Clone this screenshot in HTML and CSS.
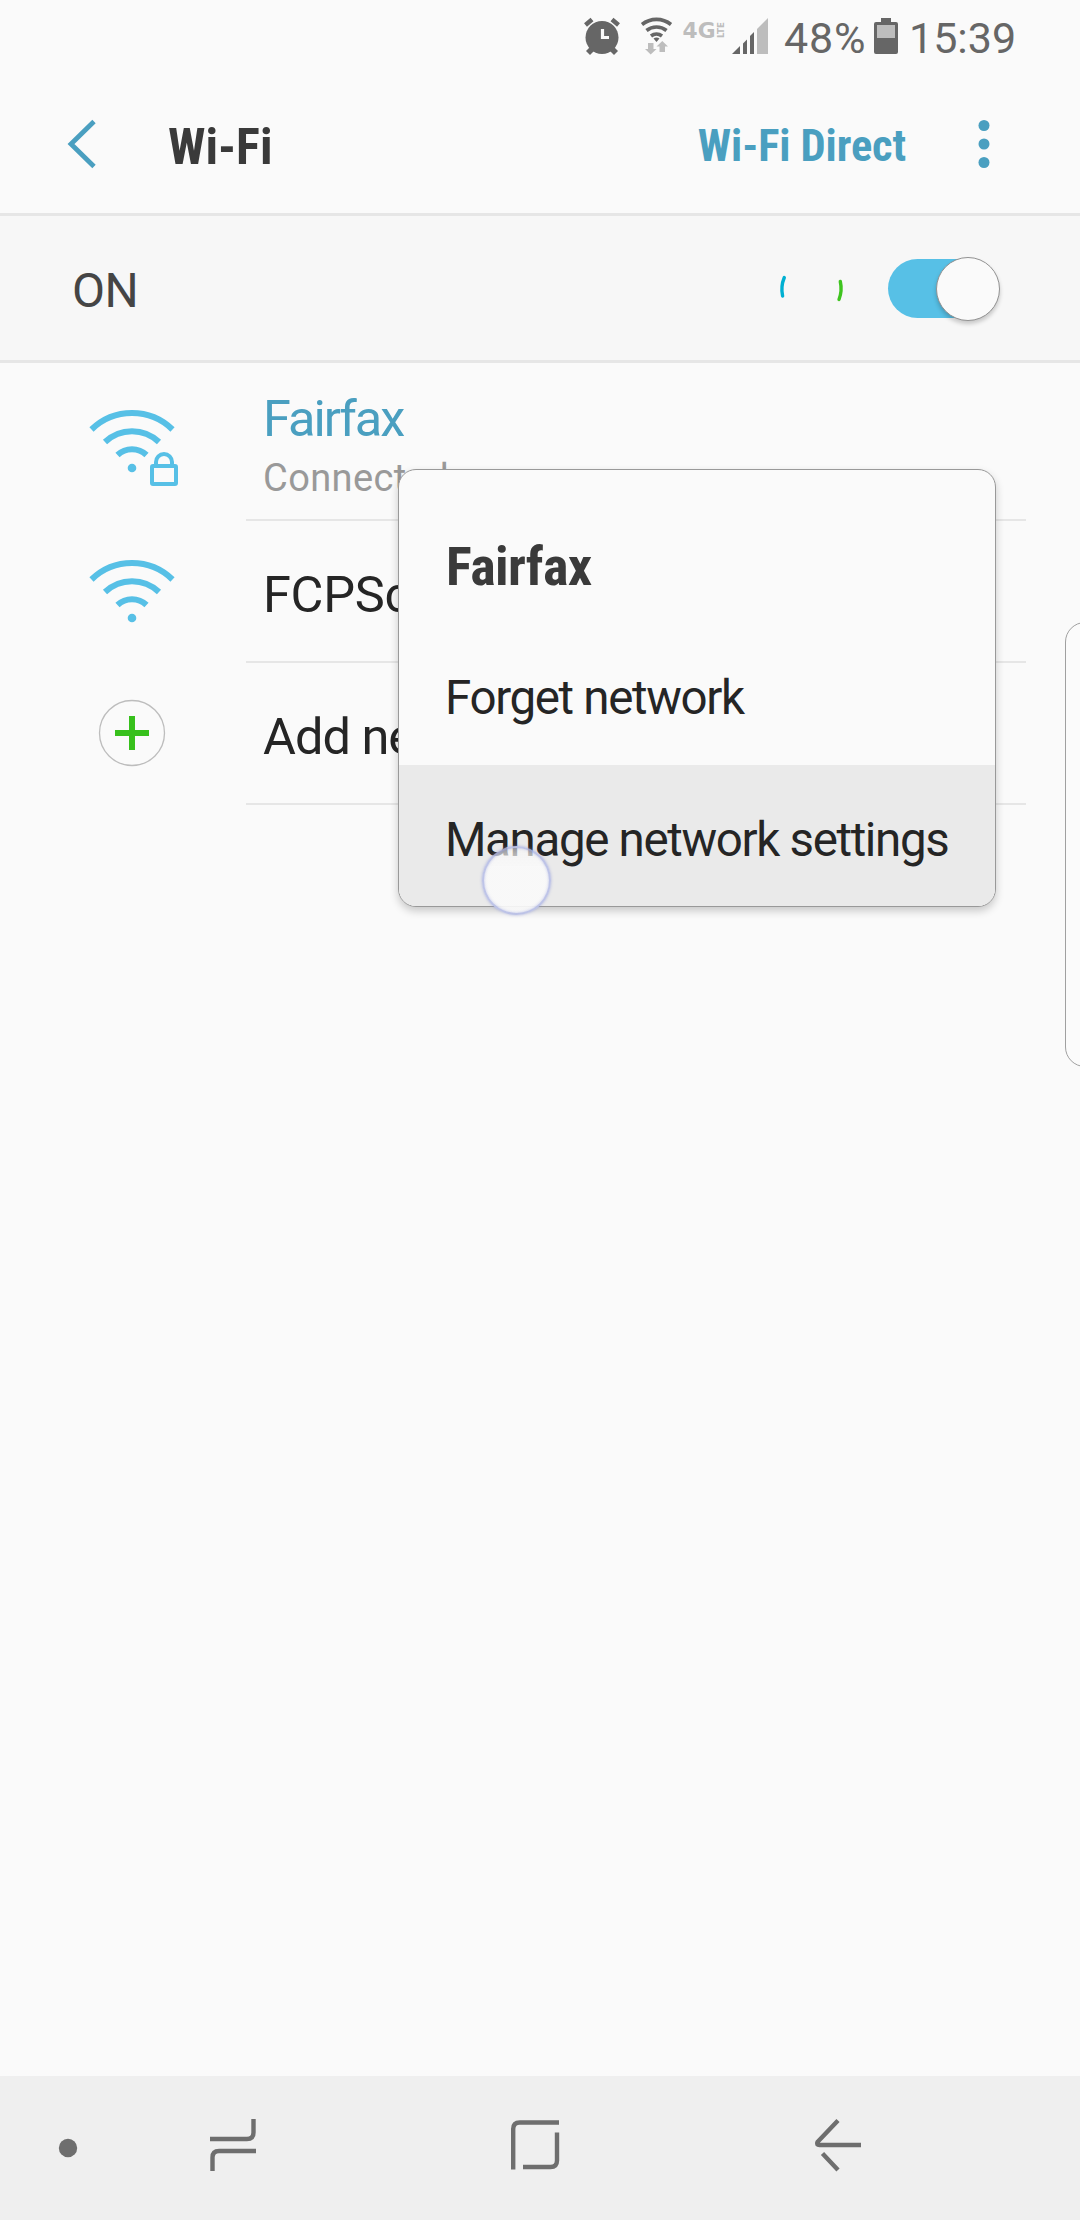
FILE: index.html
```
<!DOCTYPE html>
<html lang="en">
<head>
<meta charset="utf-8">
<title>Wi-Fi</title>
<link rel="stylesheet" href="styles.css">
</head>
<body>
<div class="screen">
  <header class="status">
    <svg class="status-icons" width="208" height="72" viewBox="576 0 208 72">
      <g fill="#666">
        <circle cx="602" cy="37.5" r="16.5"/>
        <path d="M590 47l4 4-4 4-4-4zM614 47l-4 4 4 4 4-4z"/>
      </g>
      <path d="M585.5 25l6.5-5.500M618.500 25l-6.500-5.500" stroke="#666" stroke-width="4.500" fill="none"/>
      <path d="M602.500 29v8.500h6.500" stroke="#fafafa" stroke-width="3.200" fill="none"/>
      <g fill="none" stroke="#666" stroke-width="3.600">
        <path d="M642 24.500a23 23 0 0 1 29 0M646.500 30.500a16 16 0 0 1 20 0M651 36a9 9 0 0 1 11 0"/>
      </g>
      <path d="M653.500 38.500q3-2 6 0l-3 3.500z" fill="#666"/>
      <path d="M648 43h5.500v6h3l-5.800 5.500-5.700-5.500h3zM659.500 52h5.500v-5.500h3l-5.700-5.500-5.800 5.500h3z" fill="#bdbdbd"/>
      <text class="net" x="682.500" y="37.500" textLength="33" lengthAdjust="spacingAndGlyphs">4G</text>
      <text class="lte" transform="translate(723.500 38) rotate(-90)" textLength="16" lengthAdjust="spacingAndGlyphs">LTE</text>
      <path d="M732 54l8-8v8zM743 54V43.500l4-4V54zM750 54V36l4-4V54z" fill="#666"/>
      <path d="M757 54V29l11-11V54z" fill="#bdbdbd"/>
    </svg>
    <span class="status-text pct">48%</span>
    <svg class="battery" width="24" height="36" viewBox="0 0 24 36">
      <path d="M7 0h10v4h5q2 0 2 2v28q0 2-2 2H2q-2 0-2-2V6q0-2 2-2h5z" fill="#666"/>
      <path d="M3 7h18v13H3z" fill="#bdbdbd"/>
    </svg>
    <span class="status-text">15:39</span>
  </header>

  <div class="appbar">
    <svg class="back" width="32" height="52" viewBox="0 0 32 52"><path d="M29 3.500L6 26l23 22.500" fill="none" stroke="#4a9fc0" stroke-width="4.800"/></svg>
    <h1 class="title">Wi-Fi</h1>
    <span class="direct">Wi-Fi Direct</span>
    <svg class="more" width="12" height="50" viewBox="0 0 12 50" fill="#4a9fc0"><circle cx="6" cy="6.500" r="5.500"/><circle cx="6" cy="25" r="5.500"/><circle cx="6" cy="43.500" r="5.500"/></svg>
  </div>

  <div class="master">
    <span class="on">ON</span>
    <svg class="spinner" width="70" height="70" viewBox="776 252 70 70" fill="none" stroke-width="3.400" stroke-linecap="round">
      <path d="M784.300 276.500a31 31 0 0 0-1.700 18.500" stroke="#00b0d2"/>
      <path d="M840.300 280.500a31 31 0 0 1-1.300 18" stroke="#3fc41f"/>
    </svg>
    <div class="switch"><div class="thumb"></div></div>
  </div>

  <main class="list">
    <div class="row first">
      <svg class="icon" width="246" height="158" viewBox="0 363 246 158" fill="none" stroke="#57c0e6" stroke-width="6">
        <path d="M91.500 429.500a58 58 0 0 1 81 0M105 442a39 39 0 0 1 54 0M117.500 455a21 21 0 0 1 29 0"/>
        <circle cx="132" cy="468" r="4.300" fill="#57c0e6" stroke="none"/>
        <path d="M156 464v-2a8 8 0 0 1 16 0v2" stroke-width="4"/>
        <rect x="152" y="466" width="24" height="18" rx="1" stroke-width="4"/>
      </svg>
      <div class="body">
        <span class="name active">Fairfax</span>
        <span class="state">Connected</span>
      </div>
    </div>
    <div class="row">
      <svg class="icon" width="246" height="142" viewBox="0 521 246 142" fill="none" stroke="#57c0e6" stroke-width="6">
        <path d="M91.500 579.500a58 58 0 0 1 81 0M105 592a39 39 0 0 1 54 0M117.500 605a21 21 0 0 1 29 0"/>
        <circle cx="132" cy="618" r="4.300" fill="#57c0e6" stroke="none"/>
      </svg>
      <div class="body"><span class="name ssid">FCPSchools</span></div>
    </div>
    <div class="row">
      <svg class="icon" width="246" height="142" viewBox="0 663 246 142" fill="none">
        <circle cx="132" cy="733" r="32.500" stroke="#bdbdbd" stroke-width="1.300"/>
        <path d="M115 733h34M132 716v34" stroke="#37c01c" stroke-width="6"/>
      </svg>
      <div class="body"><span class="name add">Add network</span></div>
    </div>
  </main>

  <nav class="nav">
    <svg width="1080" height="144" viewBox="0 2076 1080 144" fill="none" stroke="#6e6e6e" stroke-width="4.400">
      <circle cx="68" cy="2148" r="9.200" fill="#6e6e6e" stroke="none"/>
      <path d="M210 2139h37q6.500 0 6.500-6.500V2119M256 2151h-37q-6.500 0-6.500 6.500V2171"/>
      <path d="M513.200 2169.500V2129q0-6.500 6.500-6.500H559M523 2167h27.500q6.500 0 6.500-6.500V2132.500"/>
      <path d="M838 2120.500L817.500 2142q-1.500 3 2 3H861M822.500 2153.500l15.500 16.500" stroke-linejoin="round"/>
    </svg>
  </nav>

  <aside class="edge-panel"></aside>

  <div class="popup">
    <h2 class="popup-title">Fairfax</h2>
    <div class="option">Forget network</div>
    <div class="option pressed">Manage network settings</div>
  </div>
  <div class="touch"></div>
</div>
</body>
</html>
```
FILE: styles.css
```
* { box-sizing: border-box; }
body { margin: 0; background: #fafafa; }
.screen {
  position: relative;
  width: 1080px;
  height: 2220px;
  overflow: hidden;
  display: flex;
  flex-direction: column;
  background: #fafafa;
  font-family: Roboto, "Liberation Sans", sans-serif;
  color: #252525;
}
h1, h2 { margin: 0; }
svg { display: block; flex: none; }

.status { display: flex; height: 72px; padding-left: 576px; color: #666; }
.status-text { font-size: 43px; line-height: 76px; white-space: nowrap; }
.pct { width: 90px; letter-spacing: .8px; }
.battery { margin: 18px 11px 0 0; }
.net { font: 700 21.5px "DejaVu Sans", sans-serif; fill: #bdbdbd; }
.lte { font: 700 9px "DejaVu Sans", sans-serif; fill: #bdbdbd; }

.appbar {
  display: flex;
  align-items: center;
  height: 144px;
  padding: 0 90px 0 65px;
  border-bottom: 3px solid #e6e6e6;
}
.back { margin-top: 2px; }
.title {
  margin-left: 71px;
  padding-top: 8px;
  font-size: 50px;
  font-weight: 700;
  font-stretch: 75%;
  color: #3a3a3a;
}
.direct {
  margin-left: auto;
  padding-top: 7px;
  font-size: 44.5px;
  font-weight: 700;
  font-stretch: 75%;
  letter-spacing: -.1px;
  color: #4a9fc0;
}
.more { margin: 2px 0 0 72px; }

.master {
  display: flex;
  align-items: center;
  height: 147px;
  padding: 0 80px 0 72px;
  background: #f7f7f7;
  border-bottom: 3px solid #e6e6e6;
}
.on { padding-top: 5px; font-size: 48px; letter-spacing: -.5px; color: #454545; }
.spinner { margin-left: auto; margin-right: 42px; }
.switch {
  display: flex;
  align-items: center;
  justify-content: flex-end;
  width: 112px;
  height: 59px;
  border-radius: 30px;
  background: linear-gradient(90deg, #57c0e6 80px, transparent 80px);
}
.thumb {
  width: 64px;
  height: 64px;
  flex: none;
  margin-top: 1px;
  border: 1px solid #929292;
  border-radius: 50%;
  background: #fafafa;
  box-shadow: 0 3px 4px rgba(0, 0, 0, .2);
}

.row { display: flex; height: 142px; }
.row.first { height: 158px; }
.body {
  display: flex;
  flex-direction: column;
  justify-content: center;
  width: 780px;
  padding: 8px 0 0 17px;
  border-bottom: 2px solid #e6e6e6;
}
.first .body { justify-content: flex-start; padding-top: 26px; }
.name { font-size: 50.5px; line-height: 60px; letter-spacing: -.3px; }
.active { color: #4a9fc0; letter-spacing: -2px; }
.add { letter-spacing: -1px; }
.state { font-size: 38px; line-height: 58px; letter-spacing: .4px; color: #999; }

.nav { height: 144px; margin-top: auto; background: #efefef; }

.edge-panel {
  position: absolute;
  left: 1065px;
  top: 622px;
  width: 40px;
  height: 445px;
  border: 1px solid #a0a0a0;
  border-radius: 22px;
  background: #fbfbfb;
}

.popup {
  position: absolute;
  left: 398px;
  top: 469px;
  width: 598px;
  height: 438px;
  overflow: hidden;
  border: 1px solid #999;
  border-radius: 18px;
  background: #fafafa;
  box-shadow: 0 4px 9px rgba(0, 0, 0, .2);
}
.popup-title {
  height: 153px;
  padding: 39px 47px 0;
  font-size: 54px;
  line-height: 116px;
  font-weight: 700;
  font-stretch: 75%;
  letter-spacing: -.6px;
  color: #3a3a3a;
}
.option {
  height: 142px;
  padding: 7px 46px 0;
  font-size: 47.5px;
  line-height: 136px;
  letter-spacing: -1.35px;
  white-space: nowrap;
}
.pressed { background: #eaeaea; }

.touch {
  position: absolute;
  left: 482px;
  top: 846px;
  width: 69px;
  height: 69px;
  border: 2px solid rgba(150, 160, 220, .6);
  border-radius: 50%;
  background: linear-gradient(rgba(250, 250, 250, .55), rgba(250, 250, 250, .9) 30%);
  box-shadow: 0 0 3px rgba(130, 140, 215, .6), inset 0 0 3px rgba(130, 140, 215, .5);
}
```
